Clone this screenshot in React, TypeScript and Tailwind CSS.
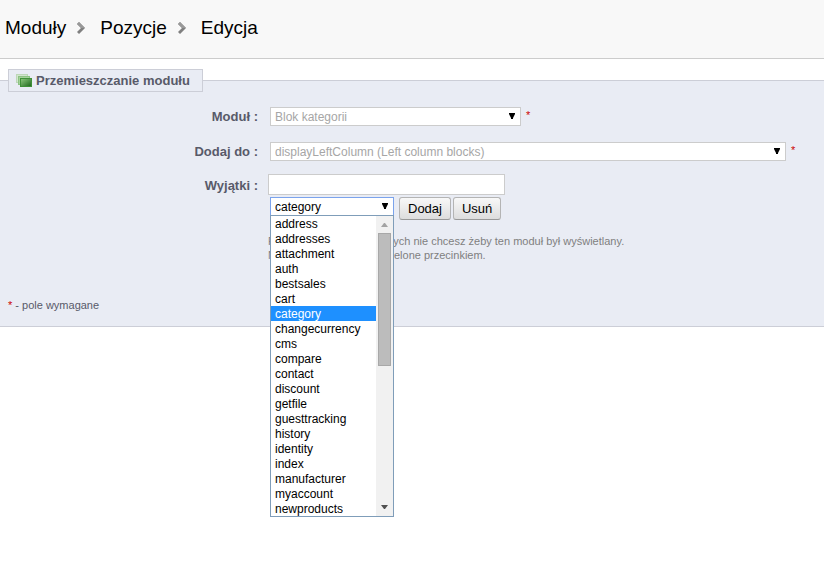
import type { ReactNode, SelectHTMLAttributes } from 'react';
import clsx from 'clsx';

const breadcrumbs = ['Moduły', 'Pozycje', 'Edycja'];

const pages = [
  'address',
  'addresses',
  'attachment',
  'auth',
  'bestsales',
  'cart',
  'category',
  'changecurrency',
  'cms',
  'compare',
  'contact',
  'discount',
  'getfile',
  'guesttracking',
  'history',
  'identity',
  'index',
  'manufacturer',
  'myaccount',
  'newproducts',
];

function ChevronIcon() {
  return (
    <svg className="h-3 w-2" viewBox="0 0 8 12">
      <path d="M0 2L2 0l6 6-6 6-2-2 4-4z" fill="#808080" />
      <path d="M0 2L2 0l6 6H4z" fill="#999999" />
    </svg>
  );
}

function StackIcon() {
  return (
    <svg className="h-4 w-4" viewBox="0 0 16 16">
      <defs>
        <linearGradient id="stack" x1="0" y1="0" x2="1" y2="1">
          <stop offset="0" stopColor="#8fcb80" />
          <stop offset="1" stopColor="#1c661a" />
        </linearGradient>
      </defs>
      <rect x="0.5" y="1.5" width="11" height="8" fill="#d3e5cf" stroke="#bdd8b8" />
      <rect x="2.5" y="3.5" width="11" height="8" fill="#a5d19b" stroke="#8cc383" />
      <rect x="4.5" y="5.5" width="11" height="8" fill="url(#stack)" stroke="#3f9038" />
    </svg>
  );
}

function Select({ className, children, ...props }: SelectHTMLAttributes<HTMLSelectElement>) {
  return (
    <span className={clsx('relative flex', className)}>
      <select
        className="h-[19px] w-full appearance-none border border-[#cccccc] bg-white pl-1 text-[12px] leading-4 text-black opacity-100 outline-none disabled:text-[#a6a6a6] data-open:border-[#7ba3ec]"
        {...props}
      >
        {children}
      </select>
      <svg className="pointer-events-none absolute top-[6px] right-[6px] h-[6px] w-[6px]" viewBox="0 0 6 6">
        <path d="M0 0h6v1L4 5v1H2V5L0 1z" fill="#000" />
      </svg>
    </span>
  );
}

function Required() {
  return <span className="text-[11px] leading-4 text-[#cc0000]">*</span>;
}

function Row({
  id,
  label,
  labelClassName = 'leading-5',
  children,
}: {
  id: string;
  label: string;
  labelClassName?: string;
  children: ReactNode;
}) {
  return (
    <div className="flex">
      <label
        htmlFor={id}
        className={clsx(
          'w-[258px] shrink-0 text-right text-[13px] font-bold text-[#585a69]',
          labelClassName,
        )}
      >
        {label} :
      </label>
      <div className="min-w-0 flex-1 pl-[10px]">{children}</div>
    </div>
  );
}

function PageList() {
  return (
    <div className="absolute top-[18px] left-0 z-10 flex w-[124px] border border-[#7f9db9] bg-white text-[12px] leading-[14px] text-black">
      <ul role="listbox" aria-label="Strony" className="min-w-0 flex-1">
        {pages.map((page) => (
          <li
            key={page}
            role="option"
            aria-selected={page === 'category'}
            className="pt-px pl-1 aria-selected:bg-[#1e90ff] aria-selected:text-white"
          >
            {page}
          </li>
        ))}
      </ul>
      <div className="flex w-[17px] flex-col items-center bg-[#f1f1f1]">
        <svg className="h-[17px] w-[17px]" viewBox="0 0 17 17">
          <path d="M5 11h7L9 7H8z" fill="#a3a3a3" />
        </svg>
        <div className="h-[133px] w-[13px] border border-[#a8a8a8] bg-[#bcbcbc]" />
        <svg className="mt-auto h-[17px] w-[17px]" viewBox="0 0 17 17">
          <path d="M5 6h7L9 10H8z" fill="#505050" />
        </svg>
      </div>
    </div>
  );
}

const buttonClass =
  'h-[23px] rounded-[3px] border border-[#b4b4b4] border-b-[#999999] bg-linear-to-b from-[#f8f8f8] to-[#dddddd] px-2 text-[13px] leading-4 text-black';

export default function App() {
  return (
    <div className="min-h-screen bg-white font-['Liberation_Sans',Arial,sans-serif]">
      <header className="border-b border-[#cccccc] bg-[#f8f8f8] px-[5px] pt-4 pb-[18px]">
        <nav className="flex items-center text-[19px] leading-6 text-black">
          {breadcrumbs.map((crumb, i) => (
            <span key={crumb} className="flex items-center">
              {i > 0 && (
                <span className="pr-[15px] pl-[11px]">
                  <ChevronIcon />
                </span>
              )}
              <a href="#">{crumb}</a>
            </span>
          ))}
        </nav>
      </header>

      <form onSubmit={(e) => e.preventDefault()}>
        <fieldset className="mt-[10px] border-y border-[#ccced7] bg-[#e9ecf4]">
          <legend className="ml-2 flex h-[23px] items-center gap-1 border border-[#ccced7] bg-[#e9ecf4] pr-3 pl-[7px] text-[13px] leading-5 font-bold text-[#585a69]">
            <StackIcon />
            Przemieszczanie modułu
          </legend>

          <div className="flex flex-col gap-3 pt-[15px]">
            <div className="flex flex-col gap-[15px]">
              <Row id="module" label="Moduł">
                <div className="flex gap-[5px] pl-[2px]">
                  <Select id="module" disabled className="w-[251px]">
                    <option>Blok kategorii</option>
                  </Select>
                  <Required />
                </div>
              </Row>
              <Row id="hook" label="Dodaj do">
                <div className="flex gap-[5px] pl-[2px]">
                  <Select id="hook" disabled className="w-[516px]">
                    <option>displayLeftColumn (Left column blocks)</option>
                  </Select>
                  <Required />
                </div>
              </Row>
            </div>
            <Row id="exceptions" label="Wyjątki" labelClassName="leading-6">
              <input
                id="exceptions"
                type="text"
                className="block h-[21px] w-[237px] border border-[#cccccc] bg-white px-1 text-[12px] outline-none"
              />
              <div className="mt-[2px] flex gap-[2px] pl-[2px]">
                <div className="relative mr-[3px] w-[124px]">
                  <Select aria-label="Strona" defaultValue="category" data-open="">
                    {pages.map((page) => (
                      <option key={page}>{page}</option>
                    ))}
                  </Select>
                  <PageList />
                </div>
                <button type="button" className={buttonClass}>
                  Dodaj
                </button>
                <button type="button" className={buttonClass}>
                  Usuń
                </button>
              </div>
              <p className="mt-[14px] text-[11px] leading-[14px] text-[#7f7f7f]">
                Proszę wskaż pliki, w których nie chcesz żeby ten moduł był wyświetlany.
                <br />
                Nazwy powinny być oddzielone przecinkiem.
              </p>
            </Row>
          </div>

          <p className="px-2 pt-[35px] pb-[13px] text-[11px] leading-4 text-[#585a69]">
            <span className="text-[#cc0000]">*</span> - pole wymagane
          </p>
        </fieldset>
      </form>
    </div>
  );
}
